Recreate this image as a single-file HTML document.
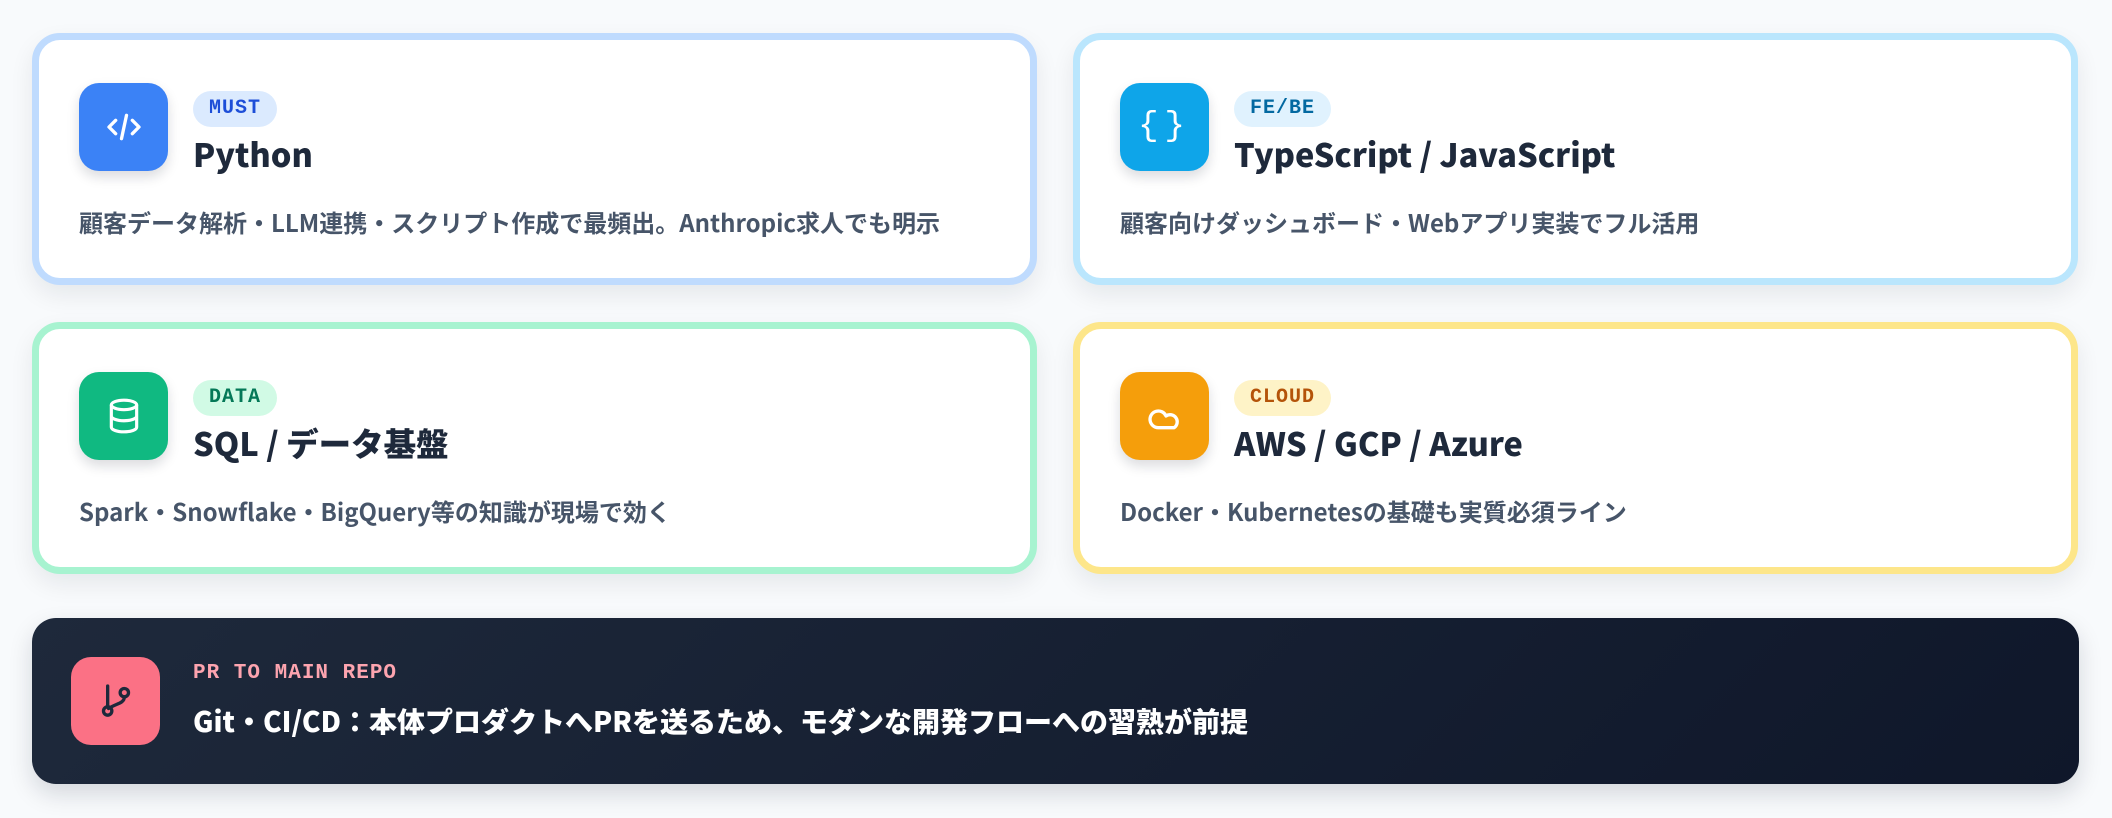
<!DOCTYPE html>
<html><head><meta charset="utf-8"><style>
*{box-sizing:border-box;margin:0;padding:0}
body{width:2112px;height:818px;background:#f8fafc;font-family:"Liberation Sans","Noto Sans CJK JP",sans-serif;position:relative;overflow:hidden}
.card{position:absolute;width:1005px;height:252px;background:#fff;border:7px solid;border-radius:28px;box-shadow:0 10px 24px rgba(15,23,42,0.08)}
.icon{position:absolute;left:40px;top:43px;width:89px;height:88px;border-radius:20px;display:flex;align-items:center;justify-content:center;box-shadow:0 6px 12px rgba(15,23,42,0.15)}
.badge{position:absolute;left:154px;top:51px;height:36px;padding:0 16px;border-radius:18px;font-family:"Liberation Mono",monospace;font-weight:bold;font-size:20px;line-height:36px;letter-spacing:1px}
.title{position:absolute;left:154px;top:92px;font-family:"Noto Sans CJK JP",sans-serif;font-weight:900;font-size:32.5px;color:#1e293b;line-height:44px}
.desc{position:absolute;left:40px;top:166px;font-family:"Noto Sans CJK JP",sans-serif;font-weight:bold;font-size:24px;color:#475569;line-height:32px}
.dark{position:absolute;left:32px;top:618px;width:2047px;height:166px;border-radius:24px;background:linear-gradient(135deg,#1e293b,#0f172a);box-shadow:0 10px 24px rgba(15,23,42,0.15)}
</style></head><body>

<div class="card" style="left:32px;top:33px;border-color:#bfdbfe">
<div class="icon" style="background:#3b82f6"><svg width="40" height="40" viewBox="0 0 24 24" fill="none" stroke="#fff" stroke-width="2" stroke-linecap="round" stroke-linejoin="round"><path d="M7 8l-4 4 4 4M17 8l4 4-4 4M13.5 5l-3 14"/></svg></div>
<div class="badge" style="background:#dbeafe;color:#1d4ed8">MUST</div>
<div class="title">Python</div>
<div class="desc">顧客データ解析・LLM連携・スクリプト作成で最頻出。Anthropic求人でも明示</div>
</div>

<div class="card" style="left:1073px;top:33px;border-color:#bae6fd">
<div class="icon" style="background:#0ea5e9"><span style="color:#fff;font-family:'Liberation Mono',monospace;font-size:34px;letter-spacing:6px">{}</span></div>
<div class="badge" style="background:#e0f2fe;color:#0369a1">FE/BE</div>
<div class="title">TypeScript / JavaScript</div>
<div class="desc">顧客向けダッシュボード・Webアプリ実装でフル活用</div>
</div>

<div class="card" style="left:32px;top:322px;border-color:#a7f3d0">
<div class="icon" style="background:#10b981"><svg width="38" height="38" viewBox="0 0 24 24" fill="none" stroke="#fff" stroke-width="2"><ellipse cx="12" cy="5" rx="8" ry="3"/><path d="M4 5v14c0 1.7 3.6 3 8 3s8-1.3 8-3V5M4 12c0 1.7 3.6 3 8 3s8-1.3 8-3"/></svg></div>
<div class="badge" style="background:#d1fae5;color:#047857">DATA</div>
<div class="title">SQL / データ基盤</div>
<div class="desc">Spark・Snowflake・BigQuery等の知識が現場で効く</div>
</div>

<div class="card" style="left:1073px;top:322px;border-color:#fde68a">
<div class="icon" style="background:#f59e0b"><svg width="40" height="40" viewBox="0 0 24 24" fill="none" stroke="#fff" stroke-width="2" stroke-linejoin="round"><path d="M17.5 19H8a5 5 0 1 1 4.6-7A3.5 3.5 0 1 1 17.5 19z"/></svg></div>
<div class="badge" style="background:#fef3c7;color:#b45309">CLOUD</div>
<div class="title">AWS / GCP / Azure</div>
<div class="desc">Docker・Kubernetesの基礎も実質必須ライン</div>
</div>

<div class="dark">
<div style="position:absolute;left:39px;top:39px;width:89px;height:88px;border-radius:20px;background:#fb7185;display:flex;align-items:center;justify-content:center"><svg width="40" height="40" viewBox="0 0 24 24" fill="none" stroke="#1e293b" stroke-width="2" stroke-linecap="round"><circle cx="7" cy="18" r="2.5"/><circle cx="17" cy="7" r="2.5"/><path d="M7 3v12.5M17 9.5c0 4-5 4-9.5 7"/></svg></div>
<div style="position:absolute;left:161px;top:44px;font-family:'Liberation Mono',monospace;font-weight:bold;font-size:21px;color:#fda4af;letter-spacing:1px">PR TO MAIN REPO</div>
<div style="position:absolute;left:161px;top:84px;font-family:'Noto Sans CJK JP',sans-serif;font-weight:900;font-size:28px;color:#fff;line-height:38px">Git・CI/CD：本体プロダクトへPRを送るため、モダンな開発フローへの習熟が前提</div>
</div>
</body></html>
